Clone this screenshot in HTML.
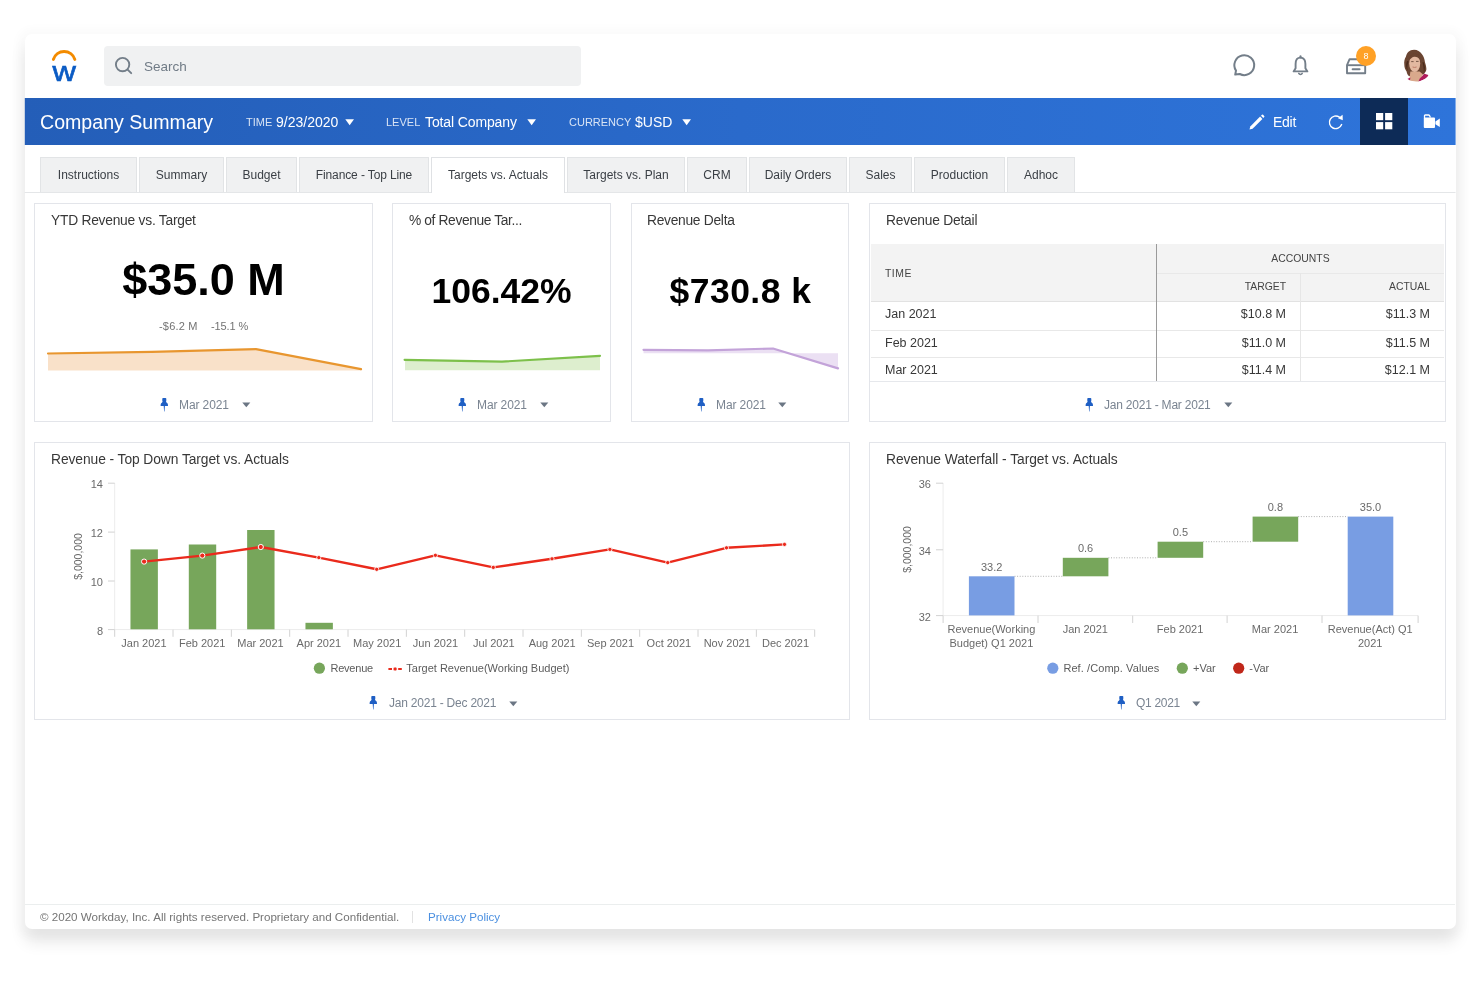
<!DOCTYPE html>
<html lang="en">
<head>
<meta charset="utf-8">
<title>Company Summary</title>
<style>
*{box-sizing:border-box}
html,body{margin:0;padding:0}
body{width:1480px;height:987px;background:#fff;position:relative;overflow:hidden;font-family:"Liberation Sans",sans-serif;color:#333;-webkit-font-smoothing:antialiased}
.abs{position:absolute}
.t,.tab,.ct,.big,.sub,.foot,.th,.td,#copy,#pp,#search span,.badge,svg.tx{will-change:transform}
#win{position:absolute;left:24.6px;top:34px;width:1431px;height:894.6px;background:#fff;border-radius:7px;box-shadow:0 13px 16px rgba(0,0,0,.095),0 2px 8px 8px rgba(0,0,0,.02)}
#search{position:absolute;left:104px;top:46px;width:477px;height:40px;background:#f0f1f2;border-radius:4px}
#search span{position:absolute;left:39.6px;top:12.6px;font-size:13.5px;color:#707b86;line-height:16px}
#bar{position:absolute;left:24px;top:98px;width:1432px;height:47px;clip-path:inset(0 0.4px 0 0.8px);background:linear-gradient(90deg,#245eb8 0%,#2a6acb 50%,#2e74da 100%)}
#bar .t{position:absolute;color:#fff;white-space:nowrap}
#bar .lbl{font-size:11px;line-height:14px;opacity:.82}
#bar .val{font-size:14px;line-height:16px}
#tabs{position:absolute;left:24px;top:157px;width:1432px;clip-path:inset(0 0.5px -2px 0.6px);height:36px;border-bottom:1px solid #e4e6e8}
.tab{position:absolute;top:0;height:35px;background:#f0f1f2;border:1px solid #e2e4e6;border-bottom:none;font-size:12px;color:#3a3f45;text-align:center;line-height:35px;white-space:nowrap}
.tab.on{background:#fff;height:36px;border-color:#dfe1e4}
.card{position:absolute;background:#fff;border:1px solid #e3e5ea}
.ct{position:absolute;font-size:13.8px;color:#383838;white-space:nowrap;line-height:16px}
.big{position:absolute;text-align:center;font-weight:bold;color:#000;white-space:nowrap}
.foot{position:absolute;font-size:12px;color:#7a8491;letter-spacing:-0.1px;white-space:nowrap;line-height:14px}
.hl{height:1px;background:#e8e8e8}
.th{font-size:10.4px;line-height:13px;color:#444;white-space:nowrap}
.td{font-size:12.5px;line-height:14px;color:#383838;white-space:nowrap}
.td.r{width:129px;text-align:right}
.sub{font-size:11px;line-height:13px;color:#737373;letter-spacing:0.2px;white-space:nowrap}
svg{position:absolute;overflow:visible}
svg text{font-family:"Liberation Sans",sans-serif}
</style>
</head>
<body>
<div id="win"></div>

<!-- top header -->
<svg class="tx" style="left:48px;top:46px" width="32" height="40" viewBox="0 0 32 40">
  <path d="M5.4 13.4 A 11.2 11.2 0 0 1 26.8 13.4" fill="none" stroke="#f38b00" stroke-width="3" stroke-linecap="round"/>
  <text x="16.1" y="35.2" text-anchor="middle" font-size="27" font-weight="normal" fill="#0a5bc4" stroke="#0a5bc4" stroke-width="0.6" textLength="23.4" lengthAdjust="spacingAndGlyphs">w</text>
</svg>
<div id="search">
  <svg style="left:10px;top:10px" width="20" height="20" viewBox="0 0 20 20"><circle cx="8.6" cy="8.6" r="6.7" fill="none" stroke="#737e89" stroke-width="1.9"/><path d="M13.6 13.6 L17.2 17.2" stroke="#737e89" stroke-width="1.9" stroke-linecap="round"/></svg>
  <span>Search</span>
</div>


<!-- header icons -->
<svg style="left:1231.4px;top:53.2px" width="26" height="26" viewBox="0 0 26 26">
  <path d="M4.2 21.6 L5 17.6 A9.9 9.9 0 1 1 8.8 21 Z" fill="none" stroke="#737e89" stroke-width="2" stroke-linejoin="round"/>
</svg>
<svg style="left:1290px;top:54.4px" width="22" height="24" viewBox="0 0 22 24">
  <path d="M10.5 3.6 C6.9 3.6 5.6 6.8 5.6 10 V14.2 L3.6 17.4 H17.4 L15.4 14.2 V10 C15.4 6.8 14.1 3.6 10.5 3.6 Z" fill="none" stroke="#737e89" stroke-width="1.9" stroke-linejoin="round"/>
  <path d="M8.8 19.4 A1.9 1.9 0 0 0 12.2 19.4" fill="none" stroke="#737e89" stroke-width="1.6" stroke-linecap="round"/>
  <path d="M10.5 2.2 V3.4" stroke="#737e89" stroke-width="2" stroke-linecap="round"/>
</svg>
<svg style="left:1344px;top:54.2px" width="26" height="24" viewBox="0 0 26 24">
  <path d="M3 11.2 L5.6 5.2 H18.6 L21.2 11.2 V19.2 H3 Z" fill="none" stroke="#737e89" stroke-width="1.9" stroke-linejoin="round"/>
  <path d="M3 11.2 H21.2" stroke="#737e89" stroke-width="1.9"/>
  <path d="M8.6 15.2 H15.6" stroke="#737e89" stroke-width="1.9" stroke-linecap="round"/>
</svg>
<div class="abs badge" style="left:1356px;top:46px;width:20px;height:20px;border-radius:50%;background:#ffa126;color:#fff;font-size:9px;line-height:21.4px;text-align:center">8</div>
<svg style="left:1399px;top:49px" width="34" height="34" viewBox="0 0 34 34">
  <defs><clipPath id="avc"><circle cx="16.6" cy="16.4" r="16.3"/></clipPath>
  <filter id="avb" x="-20%" y="-20%" width="140%" height="140%"><feGaussianBlur stdDeviation="0.45"/></filter></defs>
  <g clip-path="url(#avc)" filter="url(#avb)">
    <path d="M15.2 0.7 C10.5 0.6 7.6 4 7 7.4 C5.6 9.6 4.9 12.6 5.3 15.4 C5.2 18.4 6.4 20.6 7.6 22.4 C8 24.6 8.8 26 9.9 27 L13 27.4 L22 26.2 C24 26 25.4 25 26 23.4 C27.2 22.2 27.6 20.6 27.3 19 C27 16.8 26.6 15.2 26 13.6 C25.6 10.2 24.6 7 22.8 5 C21 2.2 18.4 0.8 15.2 0.7 Z" fill="#6b4430"/>
    <path d="M8 12 C6.6 15 7 19 8.6 22 C8 18 8.4 15 9.6 12.4 Z M24.4 13 C26 16 26.4 20 25 23.6 C24.6 20 24.6 16 23.4 13.6 Z" fill="#47291b"/>
    <path d="M11.4 22.6 L20.6 22.6 L24 25.6 L19.6 33 L10.2 31.4 Z" fill="#d9a98c"/>
    <path d="M25.4 24.8 L29.4 26 L28.8 29 L19.4 32.8 L20.6 29.8 Z" fill="#b01a5b"/>
    <path d="M8.4 30 L11.4 28.6 L11 31.2 Z" fill="#b01a5b"/>
    <ellipse cx="15.7" cy="14.4" rx="5.5" ry="8.6" fill="#e2b8a0"/>
    <path d="M10.2 11.6 C10.6 7 13 4.6 16 4.8 C19 5 21.2 7.4 21.4 11.2 C19.6 8.6 17.4 7.6 15.4 7.8 C13.4 8 11.6 9.4 10.2 11.6 Z" fill="#6b4430"/>
    <path d="M12.2 12.6 H14.6 M17 12.4 H19.6" stroke="#6a4a3c" stroke-width="0.9" fill="none"/>
    <path d="M13.6 18 Q15.6 18.9 17.6 18" stroke="#b8735e" stroke-width="0.9" fill="none"/>
  </g>
</svg>

<!-- blue bar -->
<div id="bar">
  <div class="t" style="left:16px;top:12px;font-size:19.6px;line-height:24px">Company Summary</div>
  <div class="t lbl" style="left:222px;top:17px">TIME</div>
  <div class="t val" style="left:251.6px;top:16px">9/23/2020</div>
  <svg style="left:320.6px;top:20.6px" width="10" height="7" viewBox="0 0 10 7"><path d="M0.3 0.3 H9 L4.65 6.3 Z" fill="#fff"/></svg>
  <div class="t lbl" style="left:362.3px;top:17px">LEVEL</div>
  <div class="t val" style="left:400.6px;top:16px;letter-spacing:-0.12px">Total Company</div>
  <svg style="left:503.2px;top:20.6px" width="10" height="7" viewBox="0 0 10 7"><path d="M0.3 0.3 H9 L4.65 6.3 Z" fill="#fff"/></svg>
  <div class="t lbl" style="left:544.8px;top:17px">CURRENCY</div>
  <div class="t val" style="left:610.6px;top:16px">$USD</div>
  <svg style="left:657.6px;top:20.6px" width="10" height="7" viewBox="0 0 10 7"><path d="M0.3 0.3 H9 L4.65 6.3 Z" fill="#fff"/></svg>
  <svg style="left:1224px;top:15px" width="18" height="18" viewBox="0 0 18 18">
    <path d="M1.5 16.5 L2.3 13.4 L12.1 3.6 L14.4 5.9 L4.6 15.7 Z" fill="#fff"/>
    <path d="M13 2.7 L13.9 1.8 Q14.5 1.2 15.1 1.8 L16.2 2.9 Q16.8 3.5 16.2 4.1 L15.3 5 Z" fill="#fff"/>
  </svg>
  <div class="t" style="left:1249.4px;top:16px;font-size:14px;line-height:16px;letter-spacing:-0.25px">Edit</div>
  <svg style="left:1302px;top:14px" width="20" height="20" viewBox="0 0 20 20">
    <path d="M15.6 12.6 A6.3 6.3 0 1 1 13.4 5.2" fill="none" stroke="#fff" stroke-width="1.45" stroke-linecap="round"/>
    <path d="M12 6.2 L16.6 2.8 L16.8 8.2 Z" fill="#fff"/>
  </svg>
  <div class="abs" style="left:1336px;top:0;width:48px;height:47px;background:#0d2b57"></div>
  <svg style="left:1351.8px;top:15.2px" width="17" height="17" viewBox="0 0 17 17">
    <rect x="0" y="0" width="7.2" height="7.2" fill="#fff"/><rect x="9.1" y="0" width="7.2" height="7.2" fill="#fff"/>
    <rect x="0" y="9.1" width="7.2" height="7.2" fill="#fff"/><rect x="9.1" y="9.1" width="7.2" height="7.2" fill="#fff"/>
  </svg>
  <svg style="left:1399px;top:16px" width="18" height="16" viewBox="0 0 18 16">
    <rect x="0.8" y="3.6" width="11.2" height="10.4" rx="0.9" fill="#fff"/>
    <path d="M1.5 4 V1.7 Q1.5 1 2.2 1 H5.6 Q6.2 1 6.5 1.6 L7.4 3.6" fill="none" stroke="#fff" stroke-width="1.3"/>
    <path d="M12.4 7.4 L16.8 4.6 V13 L12.4 10.2 Z" fill="#fff"/>
  </svg>
</div>

<!-- tabs -->
<div id="tabs">
  <div class="tab" style="left:16px;width:97px">Instructions</div>
  <div class="tab" style="left:115px;width:85px">Summary</div>
  <div class="tab" style="left:202px;width:71px">Budget</div>
  <div class="tab" style="left:275px;width:130px;letter-spacing:-0.12px">Finance - Top Line</div>
  <div class="tab on" style="left:407px;width:134px">Targets vs. Actuals</div>
  <div class="tab" style="left:543px;width:118px">Targets vs. Plan</div>
  <div class="tab" style="left:663px;width:60px">CRM</div>
  <div class="tab" style="left:725px;width:98px">Daily Orders</div>
  <div class="tab" style="left:825px;width:63px">Sales</div>
  <div class="tab" style="left:890px;width:91px">Production</div>
  <div class="tab" style="left:983px;width:68px">Adhoc</div>
</div>

<!-- cards -->
<div class="card" style="left:34px;top:203px;width:339px;height:219px"></div>
<div class="card" style="left:392px;top:203px;width:219px;height:219px"></div>
<div class="card" style="left:631px;top:203px;width:218.4px;height:219px"></div>
<div class="card" style="left:869px;top:203px;width:577px;height:219px"></div>
<div class="card" style="left:34px;top:442px;width:816px;height:278px"></div>
<div class="card" style="left:869px;top:442px;width:577px;height:278px"></div>

<div class="ct" style="left:51px;top:212.6px;letter-spacing:-0.243px">YTD Revenue vs. Target</div>
<div class="ct" style="left:409px;top:212.6px;letter-spacing:-0.384px">% of Revenue Tar...</div>
<div class="ct" style="left:647px;top:212.6px;letter-spacing:-0.285px">Revenue Delta</div>
<div class="ct" style="left:886px;top:212.6px;letter-spacing:-0.22px">Revenue Detail</div>
<div class="ct" style="left:51px;top:452.2px;letter-spacing:-0.068px">Revenue - Top Down Target vs. Actuals</div>
<div class="ct" style="left:886px;top:452.2px;letter-spacing:-0.04px">Revenue Waterfall - Target vs. Actuals</div>

<div class="big" style="left:34px;width:339px;top:253.6px;font-size:45px;line-height:52px">$35.0 M</div>
<div class="big" style="left:392px;width:219px;top:269.5px;font-size:35.5px;line-height:42px">106.42%</div>
<div class="big" style="left:631px;width:219px;top:269.5px;font-size:35.5px;line-height:42px;letter-spacing:0.45px">$730.8 k</div>
<div class="abs sub" style="left:158.5px;top:320px">-$6.2 M</div>
<div class="abs sub" style="left:210.5px;top:320px;letter-spacing:-0.1px">-15.1 %</div>

<!-- sparklines -->
<svg style="left:0;top:0" width="1480" height="987" viewBox="0 0 1480 987">
  <path d="M48 353.5 L152 351.8 L256 349.1 L361 369.2 L361 370.4 L48 370.4 Z" fill="#f9e1c9"/>
  <path d="M48 353.5 L152 351.8 L256 349.1 L361 369.2" fill="none" stroke="#e8962f" stroke-linecap="round" stroke-width="2.2" stroke-linejoin="round"/>
  <path d="M405 359.8 L502 361.6 L600 355.8 L600 370.2 L405 370.2 Z" fill="#ddeece"/>
  <path d="M404.6 359.8 L502 361.6 L600 355.8" fill="none" stroke="#7dc04b" stroke-linecap="round" stroke-width="2.2" stroke-linejoin="round"/>
  <path d="M643.5 349.8 L708 350.3 L773 348.5 L838 368.4 L838 353.2 L643.5 353.2 Z" fill="#ebe0f3"/>
  <path d="M643.5 349.8 L708 350.3 L773 348.5 L838 368.4" fill="none" stroke="#c3a3d9" stroke-linecap="round" stroke-width="2.2" stroke-linejoin="round"/>
</svg>
<!-- card footers -->
<svg class="pin" style="left:160.4px;top:397.59999999999997px" width="9" height="14" viewBox="0 0 9 14"><path d="M3.1 0 H5.5 Q6.3 0 6.3 0.8 V2.4 Q6.3 3 6 3.4 L6.5 4.4 Q8 5.2 8 7 V7.4 Q8 8 7.4 8 H4.9 L4.5 13.5 H4.1 L3.7 8 H1.2 Q0.6 8 0.6 7.4 V7 Q0.6 5.2 2.1 4.4 L2.6 3.4 Q2.3 3 2.3 2.4 V0.8 Q2.3 0 3.1 0 Z" fill="#1f5fc4"/></svg><div class="foot" style="left:179px;top:398.0px">Mar 2021</div><svg style="left:241.6px;top:402.4px" width="9" height="6" viewBox="0 0 9 6"><path d="M0.3 0.4 H8.3 L4.3 5.2 Z" fill="#6b7684"/></svg>
<svg class="pin" style="left:458.4px;top:397.59999999999997px" width="9" height="14" viewBox="0 0 9 14"><path d="M3.1 0 H5.5 Q6.3 0 6.3 0.8 V2.4 Q6.3 3 6 3.4 L6.5 4.4 Q8 5.2 8 7 V7.4 Q8 8 7.4 8 H4.9 L4.5 13.5 H4.1 L3.7 8 H1.2 Q0.6 8 0.6 7.4 V7 Q0.6 5.2 2.1 4.4 L2.6 3.4 Q2.3 3 2.3 2.4 V0.8 Q2.3 0 3.1 0 Z" fill="#1f5fc4"/></svg><div class="foot" style="left:477px;top:398.0px">Mar 2021</div><svg style="left:539.6px;top:402.4px" width="9" height="6" viewBox="0 0 9 6"><path d="M0.3 0.4 H8.3 L4.3 5.2 Z" fill="#6b7684"/></svg>
<svg class="pin" style="left:697.1px;top:397.59999999999997px" width="9" height="14" viewBox="0 0 9 14"><path d="M3.1 0 H5.5 Q6.3 0 6.3 0.8 V2.4 Q6.3 3 6 3.4 L6.5 4.4 Q8 5.2 8 7 V7.4 Q8 8 7.4 8 H4.9 L4.5 13.5 H4.1 L3.7 8 H1.2 Q0.6 8 0.6 7.4 V7 Q0.6 5.2 2.1 4.4 L2.6 3.4 Q2.3 3 2.3 2.4 V0.8 Q2.3 0 3.1 0 Z" fill="#1f5fc4"/></svg><div class="foot" style="left:715.7px;top:398.0px">Mar 2021</div><svg style="left:778.3px;top:402.4px" width="9" height="6" viewBox="0 0 9 6"><path d="M0.3 0.4 H8.3 L4.3 5.2 Z" fill="#6b7684"/></svg>
<svg class="pin" style="left:1084.7px;top:397.59999999999997px" width="9" height="14" viewBox="0 0 9 14"><path d="M3.1 0 H5.5 Q6.3 0 6.3 0.8 V2.4 Q6.3 3 6 3.4 L6.5 4.4 Q8 5.2 8 7 V7.4 Q8 8 7.4 8 H4.9 L4.5 13.5 H4.1 L3.7 8 H1.2 Q0.6 8 0.6 7.4 V7 Q0.6 5.2 2.1 4.4 L2.6 3.4 Q2.3 3 2.3 2.4 V0.8 Q2.3 0 3.1 0 Z" fill="#1f5fc4"/></svg><div class="foot" style="left:1103.5px;top:398.0px;letter-spacing:-0.22px">Jan 2021 - Mar 2021</div><svg style="left:1224.3px;top:402.4px" width="9" height="6" viewBox="0 0 9 6"><path d="M0.3 0.4 H8.3 L4.3 5.2 Z" fill="#6b7684"/></svg>
<svg class="pin" style="left:369.1px;top:695.8px" width="9" height="14" viewBox="0 0 9 14"><path d="M3.1 0 H5.5 Q6.3 0 6.3 0.8 V2.4 Q6.3 3 6 3.4 L6.5 4.4 Q8 5.2 8 7 V7.4 Q8 8 7.4 8 H4.9 L4.5 13.5 H4.1 L3.7 8 H1.2 Q0.6 8 0.6 7.4 V7 Q0.6 5.2 2.1 4.4 L2.6 3.4 Q2.3 3 2.3 2.4 V0.8 Q2.3 0 3.1 0 Z" fill="#1f5fc4"/></svg><div class="foot" style="left:388.6px;top:696.1999999999999px;letter-spacing:-0.22px">Jan 2021 - Dec 2021</div><svg style="left:509.1px;top:700.6px" width="9" height="6" viewBox="0 0 9 6"><path d="M0.3 0.4 H8.3 L4.3 5.2 Z" fill="#6b7684"/></svg>
<svg class="pin" style="left:1117.3px;top:695.8px" width="9" height="14" viewBox="0 0 9 14"><path d="M3.1 0 H5.5 Q6.3 0 6.3 0.8 V2.4 Q6.3 3 6 3.4 L6.5 4.4 Q8 5.2 8 7 V7.4 Q8 8 7.4 8 H4.9 L4.5 13.5 H4.1 L3.7 8 H1.2 Q0.6 8 0.6 7.4 V7 Q0.6 5.2 2.1 4.4 L2.6 3.4 Q2.3 3 2.3 2.4 V0.8 Q2.3 0 3.1 0 Z" fill="#1f5fc4"/></svg><div class="foot" style="left:1136px;top:696.1999999999999px;letter-spacing:-0.3px">Q1 2021</div><svg style="left:1192px;top:700.6px" width="9" height="6" viewBox="0 0 9 6"><path d="M0.3 0.4 H8.3 L4.3 5.2 Z" fill="#6b7684"/></svg>

<!-- table -->
<div class="abs" style="left:871px;top:243.5px;width:573px;height:58px;background:#f3f3f3"></div>
<div class="abs hl" style="left:1157px;top:273px;width:287px"></div>
<div class="abs hl" style="left:871px;top:301px;width:573px;background:#e2e2e2"></div>
<div class="abs hl" style="left:871px;top:329.5px;width:573px"></div>
<div class="abs hl" style="left:871px;top:357px;width:573px"></div>
<div class="abs hl" style="left:870px;top:380.5px;width:575px;background:#e6e8ec"></div>
<div class="abs" style="left:1300px;top:273px;width:1px;height:108px;background:#e6e6e6"></div>
<div class="abs" style="left:1156px;top:243.5px;width:1.2px;height:137.5px;background:#9a9a9a"></div>
<div class="abs th" style="left:885px;top:266.8px;letter-spacing:0.5px">TIME</div>
<div class="abs th" style="left:1200px;width:201px;text-align:center;top:251.6px">ACCOUNTS</div>
<div class="abs th" style="left:1157px;width:129px;text-align:right;top:280.3px">TARGET</div>
<div class="abs th" style="left:1301px;width:129px;text-align:right;top:280.3px">ACTUAL</div>
<div class="abs td" style="left:885px;top:306.9px">Jan 2021</div>
<div class="abs td" style="left:885px;top:335.5px">Feb 2021</div>
<div class="abs td" style="left:885px;top:363.1px">Mar 2021</div>
<div class="abs td r" style="left:1157px;top:306.9px">$10.8 M</div>
<div class="abs td r" style="left:1157px;top:335.5px">$11.0 M</div>
<div class="abs td r" style="left:1157px;top:363.1px">$11.4 M</div>
<div class="abs td r" style="left:1301px;top:306.9px">$11.3 M</div>
<div class="abs td r" style="left:1301px;top:335.5px">$11.5 M</div>
<div class="abs td r" style="left:1301px;top:363.1px">$12.1 M</div>

<!-- charts -->
<svg class="tx" style="left:0;top:0" width="1480" height="987" viewBox="0 0 1480 987" font-size="11" fill="#6a6a6a">
<g stroke="#ececec" stroke-width="1" fill="none">
<path d="M114.7 483 V629.6 H814.7"/>
</g><g stroke="#d2d2d2" stroke-width="1" fill="none">
<path d="M108 483.2 H114.7"/>
<path d="M108 532.1 H114.7"/>
<path d="M108 581.0 H114.7"/>
<path d="M108 629.6 H114.7"/>
<path d="M114.7 629.6 V636.8"/>
<path d="M173.03 629.6 V636.8"/>
<path d="M231.37 629.6 V636.8"/>
<path d="M289.7 629.6 V636.8"/>
<path d="M348.03 629.6 V636.8"/>
<path d="M406.37 629.6 V636.8"/>
<path d="M464.7 629.6 V636.8"/>
<path d="M523.03 629.6 V636.8"/>
<path d="M581.37 629.6 V636.8"/>
<path d="M639.7 629.6 V636.8"/>
<path d="M698.03 629.6 V636.8"/>
<path d="M756.37 629.6 V636.8"/>
<path d="M814.7 629.6 V636.8"/>
</g>
<text x="103" y="488.2" text-anchor="end">14</text>
<text x="103" y="537.1" text-anchor="end">12</text>
<text x="103" y="586.0" text-anchor="end">10</text>
<text x="103" y="634.6" text-anchor="end">8</text>
<text transform="translate(82.3 556.5) rotate(-90)" text-anchor="middle" font-size="10.5">$,000,000</text>
<g fill="#77a65b">
<rect x="130.47" y="549.4" width="27.4" height="79.9"/>
<rect x="188.80" y="544.5" width="27.4" height="84.8"/>
<rect x="247.14" y="530.0" width="27.4" height="99.3"/>
<rect x="305.47" y="622.8" width="27.4" height="6.5"/>
</g>
<path d="M144.1 561.6 L202.3 555.6 L260.8 547.0 L318.8 557.6 L376.7 569.3 L435.4 555.3 L493.3 567.4 L552 558.8 L609.9 549.4 L667.7 562.6 L726.5 547.8 L784.5 544.4" fill="none" stroke="#ea2a1c" stroke-width="2.4" stroke-linejoin="round"/>
<circle cx="144.1" cy="561.6" r="2.6" fill="#ea2a1c" stroke="#fff" stroke-width="1"/>
<circle cx="202.3" cy="555.6" r="2.6" fill="#ea2a1c" stroke="#fff" stroke-width="1"/>
<circle cx="260.8" cy="547.0" r="2.6" fill="#ea2a1c" stroke="#fff" stroke-width="1"/>
<circle cx="318.8" cy="557.6" r="2.1" fill="#ea2a1c" stroke="#fff" stroke-width="0.8"/>
<circle cx="376.7" cy="569.3" r="2.1" fill="#ea2a1c" stroke="#fff" stroke-width="0.8"/>
<circle cx="435.4" cy="555.3" r="2.1" fill="#ea2a1c" stroke="#fff" stroke-width="0.8"/>
<circle cx="493.3" cy="567.4" r="2.1" fill="#ea2a1c" stroke="#fff" stroke-width="0.8"/>
<circle cx="552" cy="558.8" r="2.1" fill="#ea2a1c" stroke="#fff" stroke-width="0.8"/>
<circle cx="609.9" cy="549.4" r="2.1" fill="#ea2a1c" stroke="#fff" stroke-width="0.8"/>
<circle cx="667.7" cy="562.6" r="2.1" fill="#ea2a1c" stroke="#fff" stroke-width="0.8"/>
<circle cx="726.5" cy="547.8" r="2.1" fill="#ea2a1c" stroke="#fff" stroke-width="0.8"/>
<circle cx="784.5" cy="544.4" r="2.1" fill="#ea2a1c" stroke="#fff" stroke-width="0.8"/>
<text x="143.9" y="647.4" text-anchor="middle">Jan 2021</text>
<text x="202.2" y="647.4" text-anchor="middle">Feb 2021</text>
<text x="260.5" y="647.4" text-anchor="middle">Mar 2021</text>
<text x="318.9" y="647.4" text-anchor="middle">Apr 2021</text>
<text x="377.2" y="647.4" text-anchor="middle">May 2021</text>
<text x="435.5" y="647.4" text-anchor="middle">Jun 2021</text>
<text x="493.9" y="647.4" text-anchor="middle">Jul 2021</text>
<text x="552.2" y="647.4" text-anchor="middle">Aug 2021</text>
<text x="610.5" y="647.4" text-anchor="middle">Sep 2021</text>
<text x="668.9" y="647.4" text-anchor="middle">Oct 2021</text>
<text x="727.2" y="647.4" text-anchor="middle">Nov 2021</text>
<text x="785.5" y="647.4" text-anchor="middle">Dec 2021</text>
<circle cx="319.4" cy="668.2" r="5.6" fill="#77a65b"/>
<text x="330.4" y="672.3" fill="#5c5c5c" letter-spacing="-0.2">Revenue</text>
<path d="M388.4 669 H401.8" stroke="#ea2a1c" stroke-width="2.2" stroke-dasharray="3.6 1.3 3.6 1.3"/>
<circle cx="395.1" cy="669" r="2.1" fill="#ea2a1c" stroke="#fff" stroke-width="0.8"/>
<text x="406.3" y="672.3" fill="#5c5c5c">Target Revenue(Working Budget)</text>
<g stroke="#ececec" stroke-width="1" fill="none">
<path d="M943.1 483 V615.6 H1418.1"/>
</g><g stroke="#d2d2d2" stroke-width="1" fill="none">
<path d="M936 483.2 H943.1"/>
<path d="M936 549.8 H943.1"/>
<path d="M936 615.6 H943.1"/>
<path d="M943.1 615.6 V623"/>
<path d="M1038 615.6 V623"/>
<path d="M1132.7 615.6 V623"/>
<path d="M1227.1 615.6 V623"/>
<path d="M1322 615.6 V623"/>
<path d="M1418.1 615.6 V623"/>
</g>
<text x="931" y="488.2" text-anchor="end">36</text>
<text x="931" y="554.8" text-anchor="end">34</text>
<text x="931" y="620.6" text-anchor="end">32</text>
<text transform="translate(910.8 549.5) rotate(-90)" text-anchor="middle" font-size="10.5">$,000,000</text>
<rect x="968.90" y="576.3" width="45.6" height="39.1" fill="#789de3"/>
<text x="991.7" y="570.9" text-anchor="middle">33.2</text>
<path d="M1014.50 576.3 H1062.80" stroke="#9a9a9a" stroke-width="0.8" stroke-dasharray="1 1.6" fill="none"/>
<rect x="1062.80" y="557.8" width="45.6" height="18.5" fill="#77a65b"/>
<text x="1085.6" y="552.4" text-anchor="middle">0.6</text>
<path d="M1108.40 557.8 H1157.60" stroke="#9a9a9a" stroke-width="0.8" stroke-dasharray="1 1.6" fill="none"/>
<rect x="1157.60" y="541.7" width="45.6" height="16.1" fill="#77a65b"/>
<text x="1180.4" y="536.3" text-anchor="middle">0.5</text>
<path d="M1203.20 541.7 H1252.60" stroke="#9a9a9a" stroke-width="0.8" stroke-dasharray="1 1.6" fill="none"/>
<rect x="1252.60" y="516.6" width="45.6" height="25.1" fill="#77a65b"/>
<text x="1275.4" y="511.2" text-anchor="middle">0.8</text>
<path d="M1298.20 516.6 H1347.70" stroke="#9a9a9a" stroke-width="0.8" stroke-dasharray="1 1.6" fill="none"/>
<rect x="1347.70" y="516.6" width="45.6" height="98.8" fill="#789de3"/>
<text x="1370.5" y="511.2" text-anchor="middle">35.0</text>
<text x="991.4" y="633.2" text-anchor="middle">Revenue(Working</text>
<text x="991.4" y="647" text-anchor="middle">Budget) Q1 2021</text>
<text x="1085.3" y="633.2" text-anchor="middle">Jan 2021</text>
<text x="1180.1" y="633.2" text-anchor="middle">Feb 2021</text>
<text x="1275.1" y="633.2" text-anchor="middle">Mar 2021</text>
<text x="1370.2" y="633.2" text-anchor="middle">Revenue(Act) Q1</text>
<text x="1370.2" y="647" text-anchor="middle">2021</text>
<circle cx="1052.8" cy="668.2" r="5.6" fill="#789de3"/>
<text x="1063.4" y="672.3" fill="#5c5c5c" letter-spacing="0.08">Ref. /Comp. Values</text>
<circle cx="1182.3" cy="668.2" r="5.6" fill="#77a65b"/>
<text x="1193" y="672.3" fill="#5c5c5c">+Var</text>
<circle cx="1238.7" cy="668.2" r="5.6" fill="#c0271a"/>
<text x="1249.3" y="672.3" fill="#5c5c5c">-Var</text>
</svg>

<!-- footer -->
<div class="abs" style="left:25px;top:904px;width:1430px;height:1px;background:#ebeeee"></div>
<div class="abs" id="copy" style="left:40.4px;top:910px;font-size:11.6px;line-height:14px;color:#757575;white-space:nowrap">© 2020 Workday, Inc. All rights reserved. Proprietary and Confidential.</div>
<div class="abs" style="left:412px;top:911px;width:1px;height:12px;background:#e2e2e2"></div>
<div class="abs" id="pp" style="left:428px;top:910px;font-size:11.6px;line-height:14px;color:#4a8fe0;white-space:nowrap">Privacy Policy</div>
</body>
</html>
